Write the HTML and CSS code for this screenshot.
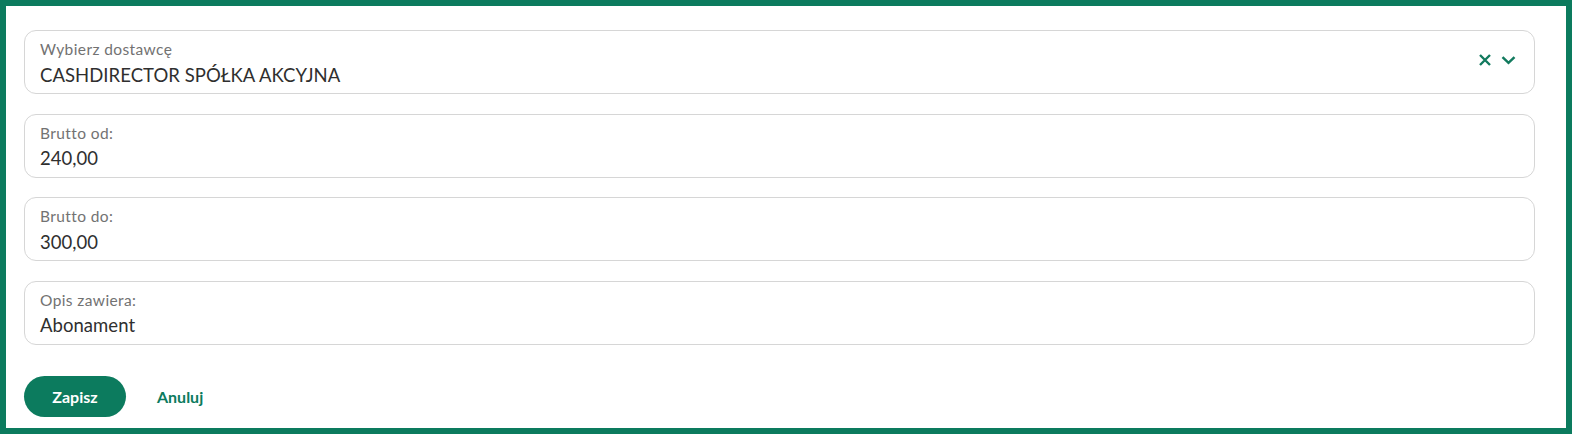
FILE: index.html
```html
<!DOCTYPE html>
<html lang="pl">
<head>
<meta charset="utf-8">
<link rel="stylesheet" href="styles.css">
</head>
<body>
<div class="frame">
  <form class="form">
    <div class="field">
      <div class="field-body">
        <div class="label">Wybierz dostawcę</div>
        <div class="value">CASHDIRECTOR SPÓŁKA AKCYJNA</div>
      </div>
      <div class="icons">
        <svg class="ico" width="14" height="14" viewBox="0 0 14 14"><path d="M2 2 L12 12 M12 2 L2 12" stroke="#127a5e" stroke-width="2.4" stroke-linecap="butt" fill="none"/></svg>
        <svg class="ico" width="15" height="14" viewBox="0 0 15 14"><path d="M1.5 4.2 L7.5 9.8 L13.5 4.2" stroke="#127a5e" stroke-width="2.5" fill="none"/></svg>
      </div>
    </div>
    <div class="field">
      <div class="field-body">
        <div class="label">Brutto od:</div>
        <div class="value">240,00</div>
      </div>
    </div>
    <div class="field">
      <div class="field-body">
        <div class="label">Brutto do:</div>
        <div class="value">300,00</div>
      </div>
    </div>
    <div class="field">
      <div class="field-body">
        <div class="label">Opis zawiera:</div>
        <div class="value">Abonament</div>
      </div>
    </div>
    <div class="actions">
      <button type="button" class="btn-primary">Zapisz</button>
      <button type="button" class="btn-link">Anuluj</button>
    </div>
  </form>
</div>
</body>
</html>
```
FILE: styles.css
```css
html, body {
  margin: 0;
  padding: 0;
  background: #ffffff;
}
body {
  font-family: Lato, "Open Sans", Arial, sans-serif;
  color: #333333;
}
.frame {
  box-sizing: border-box;
  width: 1572px;
  height: 434px;
  border: 6px solid #0c7b5e;
  background: #ffffff;
  padding: 24px 31px 0 18px;
}
.form {
  display: flex;
  flex-direction: column;
}
.field {
  box-sizing: border-box;
  height: 64px;
  border: 1px solid #d6d6d6;
  border-radius: 12px;
  display: flex;
  align-items: flex-start;
  padding: 9px 18px 0 15px;
  margin-bottom: 19.5px;
}
.field-body {
  flex: 1;
  display: flex;
  flex-direction: column;
}
.label {
  font-size: 15.5px;
  line-height: 18px;
  letter-spacing: 0.4px;
  color: #727272;
}
.value {
  font-size: 18.5px;
  line-height: 24px;
  letter-spacing: 0.05px;
  color: #2f2f2f;
  margin-top: 4.5px;
}
.icons {
  display: flex;
  gap: 9px;
  align-items: center;
  margin-top: 13px;
}
.ico {
  display: block;
}
.actions {
  display: flex;
  align-items: center;
  gap: 31px;
  margin-top: 11.5px;
}
.btn-primary {
  width: 102px;
  height: 41px;
  border: none;
  border-radius: 21px;
  background: #0c7b5e;
  color: #ffffff;
  font-family: Lato, Arial, sans-serif;
  font-weight: 700;
  font-size: 16px;
  cursor: pointer;
}
.btn-link {
  border: none;
  background: none;
  padding: 0;
  color: #0c7b5e;
  font-family: Lato, Arial, sans-serif;
  font-weight: 700;
  font-size: 16px;
  cursor: pointer;
}
```
